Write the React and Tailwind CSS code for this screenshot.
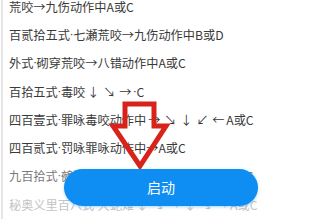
import React from 'react';

const moves = [
  { text: '荒咬→九伤动作中A或C', color: 'text-[#3a3a3a]' },
  { text: '百贰拾五式·七瀬荒咬→九伤动作中B或D', color: 'text-[#3a3a3a]' },
  { text: '外式·砌穿荒咬→八错动作中A或C', color: 'text-[#3a3a3a]' },
  { text: '百拾五式·毒咬↓↘→·C', color: 'text-[#3a3a3a]' },
  { text: '四百壹式·罪咏毒咬动作中→↘↓↙←A或C', color: 'text-[#3a3a3a]' },
  { text: '四百贰式·罚咏罪咏动作中→A或C', color: 'text-[#3a3a3a]' },
  { text: '九百拾式·鵺摘罪咬动作中→↘↓↙←A或C', color: 'text-[#7a7a7a]' },
  { text: '秘奥义里百八式·大蛇薙↓↘→↓↘→A或C', color: 'text-[#c4c4c4]' },
];

const cjk = { fontFamily: '"Noto Sans CJK SC", "Noto Sans", sans-serif' };
const latin = { fontFamily: 'Roboto, sans-serif' };

// narrow middle dot, and joystick arrow runs spaced out like the original
function MoveText({ text }) {
  const tokens = text.split(/(·|[↓↘→↙←]{2,})/).filter(Boolean);
  return tokens.map((t, i) => {
    if (t === '·') return <span key={i} style={latin}>·</span>;
    if (/^[↓↘→↙←]{2,}$/.test(t)) {
      return [...t].map((a, j) => (
        <span key={`${i}-${j}`} className="inline-block w-[16px] text-center">{a}</span>
      ));
    }
    return <React.Fragment key={i}>{t}</React.Fragment>;
  });
}

function DownArrow() {
  return (
    <svg
      className="absolute left-[108px] top-[100px] pointer-events-none"
      width="64"
      height="70"
      viewBox="0 0 64 70"
    >
      <path
        d="M17 4 H46 V26 H58 L32 66 L5 26 H17 Z"
        fill="none"
        stroke="#d8231b"
        strokeWidth="5"
        strokeLinejoin="miter"
      />
    </svg>
  );
}

export default function App() {
  return (
    <div className="relative w-[320px] h-[219px] overflow-hidden bg-white" style={cjk}>
      <div className="flex h-full">
        <div className="w-[2px] bg-[#e6e6e6] ml-[1px]" />
        <div className="flex flex-col pl-[6px] -mt-[7px]">
          {moves.map(m => (
            <div key={m.text} className={`h-[28.8px] flex items-center text-[12.2px] whitespace-nowrap ${m.color}`}>
              <MoveText text={m.text} />
            </div>
          ))}
        </div>
      </div>
      <DownArrow />
      <button className="absolute left-[64px] top-[169px] w-[194px] h-[37px] rounded-full bg-[#0e8ef3] text-white text-[14px] shadow-[0_1px_3px_rgba(14,142,243,0.35)]" style={cjk}>
        启动
      </button>
    </div>
  );
}
